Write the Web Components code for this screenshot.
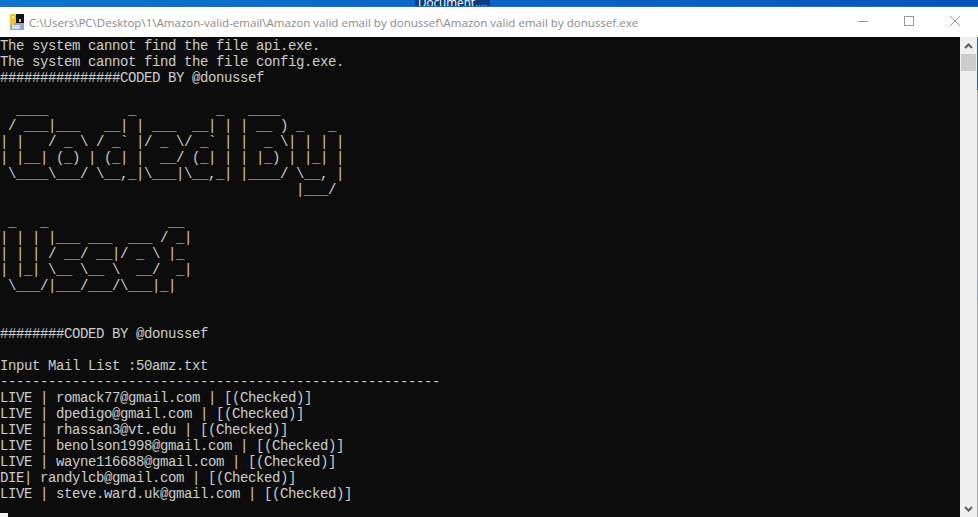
<!DOCTYPE html>
<html>
<head>
<meta charset="utf-8">
<title>Amazon valid email by donussef</title>
<style>
  html, body { margin: 0; height: 100%; overflow: hidden; background: #0c0c0c; }
</style>
</head>
<body>
<console-window title-text="C:\Users\PC\Desktop\1\Amazon-valid-email\Amazon valid email by donussef\Amazon valid email by donussef.exe">
  <console-output>The system cannot find the file api.exe.
The system cannot find the file config.exe.
###############CODED BY @donussef

  ____          _          _   ____
 / ___|___   __| | ___  __| | | __ ) _   _
| |   / _ \ / _` |/ _ \/ _` | |  _ \| | | |
| |__| (_) | (_| |  __/ (_| | | |_) | |_| |
 \____\___/ \__,_|\___|\__,_| |____/ \__, |
                                     |___/

 _   _               __
| | | |___ ___  ___ / _|
| | | / __/ __|/ _ \ |_
| |_| \__ \__ \  __/  _|
 \___/|___/___/\___|_|


########CODED BY @donussef

Input Mail List :50amz.txt
-------------------------------------------------------
LIVE | romack77@gmail.com | [(Checked)]
LIVE | dpedigo@gmail.com | [(Checked)]
LIVE | rhassan3@vt.edu | [(Checked)]
LIVE | benolson1998@gmail.com | [(Checked)]
LIVE | wayne116688@gmail.com | [(Checked)]
DIE| randylcb@gmail.com | [(Checked)]
LIVE | steve.ward.uk@gmail.com | [(Checked)]</console-output>
</console-window>

<script>
class ConsoleWindow extends HTMLElement {
  constructor() {
    super();
    this.attachShadow({ mode: 'open' });
  }

  connectedCallback() {
    this.shadowRoot.innerHTML = `
      <style>
        :host {
          display: flex;
          flex-direction: column;
          height: 100vh;
          overflow: hidden;
        }
        #desk {
          height: 6px;
          flex: none;
          overflow: hidden;
          background: linear-gradient(90deg, #0b76cf, #0a62c4 60%, #0754bd);
          border-bottom: 1px solid #2a6ea8;
          padding-left: 415px;
          display: flex;
        }
        #desk span {
          padding: 0 3px;
          background: #0a3f86;
          color: #fff;
          font: 11.7px "Open Sans", sans-serif;
          line-height: 5px;
        }
        #bar {
          height: 30px;
          flex: none;
          display: flex;
          align-items: center;
          background: #fff;
          padding-left: 8px;
          font: 11.55px "Open Sans", sans-serif;
          color: #8a8a8a;
        }
        #bar svg.icon { flex: none; margin-right: 5px; }
        #bar .name { flex: 1; white-space: nowrap; overflow: hidden; }
        #ctrls { display: flex; flex: none; padding-bottom: 2px; }
        .ctrl { width: 46px; height: 28px; display: flex; align-items: center; justify-content: center; }
        #body { flex: 1; display: flex; min-height: 0; }
      </style>
      <div id="desk"><span>Document....</span></div>
      <div id="bar">
        <svg class="icon" width="16" height="16" viewBox="0 0 16 16">
          <rect x="2" y="9" width="14" height="7" fill="#8fa6c4"/>
          <rect x="4" y="11" width="8" height="4" fill="#d5dde8"/>
          <rect x="7" y="0" width="9" height="9" fill="#11151d"/>
          <path d="M2 1.5C2 .6 2.6 0 3.5 0H8v9H6v2H3.5C2.6 11 2 10.4 2 9.5Z" fill="#f2c230"/>
          <rect x="4" y="2" width="2" height="2" fill="#fff3b8"/>
          <rect x="11" y="5" width="2" height="3" fill="#f2c230"/>
        </svg>
        <span class="name"></span>
        <div id="ctrls">
          <div class="ctrl"><svg width="10" height="10"><path d="M0 5.5h10" stroke="#999" fill="none"/></svg></div>
          <div class="ctrl"><svg width="10" height="10"><rect x=".5" y=".5" width="9" height="9" stroke="#999" fill="none"/></svg></div>
          <div class="ctrl"><svg width="10" height="10"><path d="M0 0l10 10M10 0L0 10" stroke="#999" fill="none"/></svg></div>
        </div>
      </div>
      <div id="body"><slot></slot></div>
    `;
    this.shadowRoot.querySelector('.name').textContent = this.getAttribute('title-text');
  }
}

class ConsoleOutput extends HTMLElement {
  constructor() {
    super();
    this.attachShadow({ mode: 'open' });
  }

  connectedCallback() {
    this.shadowRoot.innerHTML = `
      <style>
        :host {
          display: flex;
          flex: 1;
          min-width: 0;
          background: #0c0c0c;
        }
        #text {
          flex: 1;
          min-width: 0;
          overflow: hidden;
          padding-top: 1px;
        }
        pre {
          margin: 0;
          color: #cccccc;
          font: 14px/16px "Liberation Mono", monospace;
          letter-spacing: -0.4px;
        }
        #cursor {
          width: 8px;
          height: 16px;
          background: #f2f2f2;
          clip-path: inset(11px 0 0 0);
        }
      </style>
      <div id="text">
        <pre><slot></slot></pre>
        <div id="cursor"></div>
      </div>
      <console-scrollbar></console-scrollbar>
    `;
  }
}

class ConsoleScrollbar extends HTMLElement {
  constructor() {
    super();
    this.attachShadow({ mode: 'open' });
  }

  connectedCallback() {
    this.shadowRoot.innerHTML = `
      <style>
        :host {
          display: flex;
          flex: none;
          width: 18px;
        }
        #lane { flex: 1; display: flex; flex-direction: column; background: #f0f0f0; }
        /* the desktop behind shows through the 1px edge of the window */
        #edge {
          width: 1px;
          flex: none;
          background: linear-gradient(#2a5fa0 0 53px, #a8a8a8 53px 243px, #8ea4bc 243px 263px, #a8a8a8 263px);
        }
        .arrow { height: 17px; display: flex; align-items: center; justify-content: center; flex: none; }
        #thumb { height: 17px; margin: 0 1px; background: #cdcdcd; flex: none; }
        #track { flex: 1; }
      </style>
      <div id="lane">
        <div class="arrow"><svg width="9" height="6" viewBox="0 0 9 6"><path d="M1 5l3.5-3.5L8 5" stroke="#606060" stroke-width="2" fill="none"/></svg></div>
        <div id="thumb"></div>
        <div id="track"></div>
        <div class="arrow"><svg width="9" height="6" viewBox="0 0 9 6"><path d="M1 1l3.5 3.5L8 1" stroke="#606060" stroke-width="2" fill="none"/></svg></div>
      </div>
      <div id="edge"></div>
    `;
  }
}

customElements.define('console-window', ConsoleWindow);
customElements.define('console-output', ConsoleOutput);
customElements.define('console-scrollbar', ConsoleScrollbar);
</script>
</body>
</html>
